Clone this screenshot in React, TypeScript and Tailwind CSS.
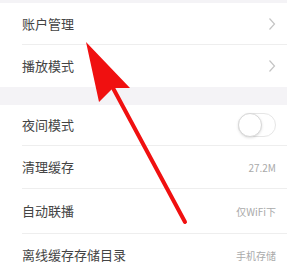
import React from "react";

const Chevron = () => (
  <svg width="8" height="14" viewBox="0 0 8 14" fill="none">
    <path d="M1.5 1.5 L6.5 7 L1.5 12.5" stroke="#c4c4c4" strokeWidth="1.2" />
  </svg>
);

function Row({ label, right, divider = true, h = "h-[42px]" }: { label: string; right?: React.ReactNode; divider?: boolean; h?: string }) {
  return (
    <div className="bg-white pl-[22px]">
      <div className={`flex items-center justify-between pr-[11px] ${h} ${divider ? "border-b border-[#eeeeee]" : ""}`}>
        <span className="text-[13px] text-[#444444]">{label}</span>
        {right}
      </div>
    </div>
  );
}

export default function App() {
  return (
    <div className="relative w-[287px] h-[275px] overflow-hidden bg-[#f4f3f6]" style={{ fontFamily: '"Noto Sans CJK SC", "Noto Sans", sans-serif' }}>
      <div className="h-[3px]" />
      <Row label="账户管理" h="h-[42px]" right={<Chevron />} />
      <Row label="播放模式" divider={false} h="h-[42px]" right={<Chevron />} />
      <div className="h-[18px]" />
      <Row
        label="夜间模式"
        h="h-[41px]"
        right={
          <div className="w-[38px] h-[24px] rounded-full border border-[#e6e6e6] bg-white relative">
            <div className="absolute left-[-1px] top-[-1px] w-[24px] h-[24px] rounded-full bg-white border border-[#d8d8d8] shadow-sm" />
          </div>
        }
      />
      <Row label="清理缓存" h="h-[43px]" right={<span className="text-[10px] text-[#aaaaaa]">27.2M</span>} />
      <Row label="自动联播" h="h-[45px]" right={<span className="text-[10px] text-[#aaaaaa]">仅WiFi下</span>} />
      <Row label="离线缓存存储目录" divider={false} h="h-[42px]" right={<span className="text-[10px] text-[#aaaaaa]">手机存储</span>} />
      <svg className="absolute left-0 top-0" width="287" height="275" viewBox="0 0 287 275">
        <line x1="113" y1="88" x2="185" y2="222" stroke="#f01010" strokeWidth="4" strokeLinecap="round" />
        <polygon points="86,42 130,88 113,88 99,102" fill="#f01010" />
      </svg>
    </div>
  );
}
